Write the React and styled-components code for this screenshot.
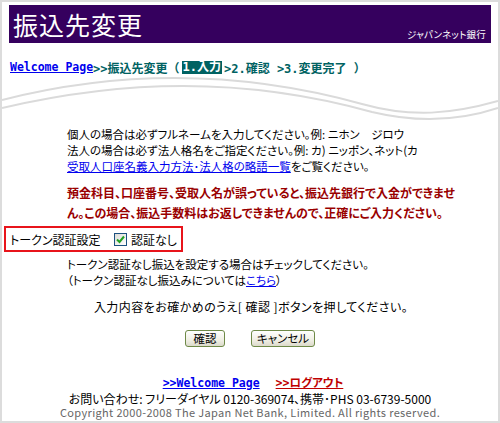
import React from "react";
import styled, { createGlobalStyle } from "styled-components";

const Global = createGlobalStyle`
  html, body { margin: 0; padding: 0; background: #fff; }
  body {
    font-family: "Noto Sans CJK JP", "Liberation Sans", sans-serif;
    font-size: 12px;
    color: #000;
  }
`;

const Page = styled.div`
  box-sizing: border-box;
  width: 500px;
  height: 423px;
  border: 2px solid #dcdcdc;
  background: #fff;
  overflow: hidden;
  font-feature-settings: "palt";
`;

const Header = styled.header`
  margin: 3px 7px 0;
  height: 38px;
  background: #35005e;
  display: flex;
  justify-content: space-between;
  align-items: stretch;
  color: #fff;
`;

const Title = styled.h1`
  margin: 0;
  padding: 3px 0 0 4px;
  font-size: 25px;
  font-weight: normal;
  line-height: 32px;
  letter-spacing: 1px;
`;

const Brand = styled.span`
  align-self: flex-end;
  padding: 0 5px 3px 0;
  font-size: 9.5px;
  line-height: 12px;
  letter-spacing: 0.2px;
`;

const Crumbs = styled.nav`
  margin: 17px 0 0 8px;
  height: 14px;
  display: flex;
  align-items: center;
  white-space: nowrap;
  font-family: "DejaVu Sans Mono", "Noto Sans CJK JP", monospace;
  font-size: 12px;
  font-weight: bold;
  color: #006262;
  font-feature-settings: normal;
`;

const NavLink = styled.a`
  color: ${p => (p.$tone === "red" ? "#c00000" : "#0000ee")};
  font-family: "DejaVu Sans Mono", "Noto Sans CJK JP", monospace;
  font-size: 11.5px;
  font-weight: bold;
  line-height: 15px;
  text-decoration: underline;
`;

const Step = styled.span`
  padding: 0 1px;
  margin: 0 2px;
  background: ${p => (p.$active ? "#006262" : "transparent")};
  color: ${p => (p.$active ? "#fff" : "inherit")};
  line-height: 13px;
`;

const Wave = styled.svg`
  display: block;
  width: 496px;
  height: 48px;
`;

const Body = styled.section`
  padding: 4px 0 0 65px;
  font-size: 11.5px;
  line-height: 16px;
`;

const Para = styled.p`
  margin: 0;
  white-space: nowrap;
`;

const Link = styled.a`
  color: #0000ee;
  text-decoration: underline;
`;

const Warning = styled.p`
  margin: 9px 0 0 65px;
  color: #990000;
  font-weight: bold;
  font-size: 12px;
  line-height: 20px;
  white-space: nowrap;
`;

const TokenBox = styled.div`
  box-sizing: border-box;
  width: 179px;
  height: 26px;
  margin: 3px 0 0 2px;
  border: 2px solid #e8141b;
  display: flex;
  align-items: center;
  padding-left: 4px;
  white-space: nowrap;
`;

const TokenLabel = styled.span`
  width: 104px;
`;

const CheckLabel = styled.label`
  display: inline-flex;
  align-items: center;
  gap: 4px;
`;

const CheckSquare = styled.span`
  box-sizing: border-box;
  width: 13px;
  height: 13px;
  border: 1px solid #1c5180;
  background: linear-gradient(135deg, #dcdcd7, #fff);
  display: inline-flex;
  align-items: center;
  justify-content: center;
`;

const Note = styled.section`
  padding: 4px 0 0 65px;
  font-size: 11.5px;
  line-height: 16px;
`;

const Prompt = styled.p`
  margin: 11px 0 0;
  text-align: center;
  white-space: nowrap;
  line-height: 16px;
  letter-spacing: 0.45px;
  padding-left: 2px;
`;

const Buttons = styled.div`
  margin-top: 15px;
  display: flex;
  justify-content: center;
  gap: 26px;
`;

const Button = styled.button`
  height: 17px;
  min-width: ${p => p.$w}px;
  padding: 0 5px;
  border: 1px solid #6f8a48;
  border-radius: 3px;
  background: linear-gradient(#ffffff, #f0efe4 60%, #dcdacb);
  font-family: "Noto Sans CJK JP", sans-serif;
  font-size: 11.5px;
  line-height: 15px;
  color: #000;
  font-feature-settings: "palt";
`;

const Footer = styled.footer`
  margin-top: 28px;
  text-align: center;
  white-space: nowrap;
`;

const FooterLinks = styled.div`
  display: flex;
  justify-content: center;
  gap: 16px;
  padding-left: 6px;
  height: 16px;
  align-items: center;
`;

const Contact = styled.div`
  font-size: 12px;
  line-height: 15px;
`;

const Copy = styled.div`
  color: #666;
  font-size: 11px;
  line-height: 13px;
  letter-spacing: 0.35px;
`;

const CheckMark = () => (
  <svg width="9" height="9" viewBox="0 0 9 9">
    <path d="M1 4.5 L3.5 7 L8 1.5" fill="none" stroke="#21a121" strokeWidth="2" />
  </svg>
);

export default function App() {
  return (
    <Page>
      <Global />
      <Header>
        <Title>振込先変更</Title>
        <Brand>ジャパンネット銀行</Brand>
      </Header>

      <Crumbs>
        <NavLink href="#">Welcome Page</NavLink>
        <span>&gt;&gt;振込先変更（</span>
        <Step $active>1.入力</Step>
        <span>&gt;2.確認 &gt;3.変更完了 ）</span>
      </Crumbs>

      <Wave viewBox="0 0 496 48">
        <path d="M0 26 C 110 -2, 230 -6, 360 30 C 410 44, 450 40, 496 27" fill="none" stroke="#dadada" strokeWidth="2" />
        <path d="M0 34 C 120 6, 240 2, 370 38 C 420 50, 460 46, 496 34" fill="none" stroke="#dadada" strokeWidth="2" />
      </Wave>

      <Body>
        <Para>個人の場合は必ずフルネームを入力してください。例: ニホン　ジロウ</Para>
        <Para>法人の場合は必ず法人格名をご指定ください。例: カ) ニッポン、ネット(カ</Para>
        <Para>
          <Link href="#">受取人口座名義入力方法･法人格の略語一覧</Link>をご覧ください。
        </Para>
      </Body>
      <Warning>
        預金科目、口座番号、受取人名が誤っていると、振込先銀行で入金ができませ
        <br />
        ん。この場合、振込手数料はお返しできませんので、正確にご入力ください。
      </Warning>

      <TokenBox>
        <TokenLabel>トークン認証設定</TokenLabel>
        <CheckLabel>
          <CheckSquare>
            <CheckMark />
          </CheckSquare>
          認証なし
        </CheckLabel>
      </TokenBox>

      <Note>
        <Para>トークン認証なし振込を設定する場合はチェックしてください。</Para>
        <Para>
          （トークン認証なし振込みについては<Link href="#">こちら</Link>）
        </Para>
      </Note>

      <Prompt>入力内容をお確かめのうえ[ 確認 ]ボタンを押してください。</Prompt>

      <Buttons>
        <Button $w={40}>確認</Button>
        <Button $w={60}>キャンセル</Button>
      </Buttons>

      <Footer>
        <FooterLinks>
          <NavLink href="#">&gt;&gt;Welcome Page</NavLink>
          <NavLink href="#" $tone="red">&gt;&gt;ログアウト</NavLink>
        </FooterLinks>
        <Contact>お問い合わせ: フリーダイヤル 0120-369074、携帯･PHS 03-6739-5000</Contact>
        <Copy>Copyright 2000-2008 The Japan Net Bank, Limited. All rights reserved.</Copy>
      </Footer>
    </Page>
  );
}
